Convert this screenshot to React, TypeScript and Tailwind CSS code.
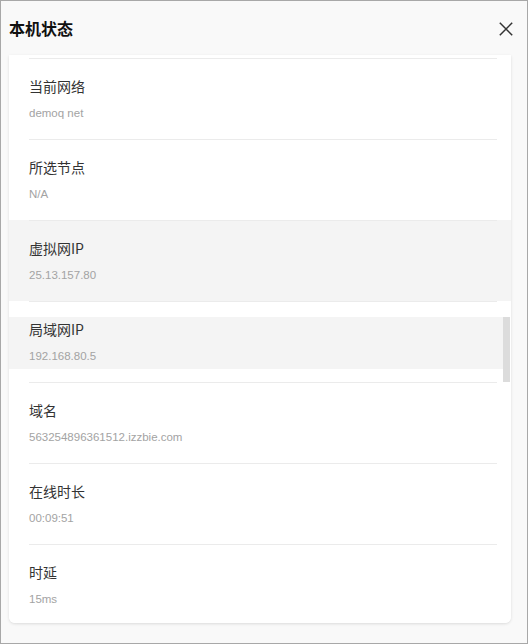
import React from "react";

const rows = [
  { label: "当前网络", value: "demoq net" },
  { label: "所选节点", value: "N/A" },
  { label: "虚拟网IP", value: "25.13.157.80", hl: "full" },
  { label: "局域网IP", value: "192.168.80.5", hl: "part" },
  { label: "域名", value: "563254896361512.izzbie.com" },
  { label: "在线时长", value: "00:09:51" },
  { label: "时延", value: "15ms" },
];

export default function App() {
  return (
    <div
      className="w-[528px] h-[644px] border border-[#a8a8a8] bg-[#f9f9f9] flex flex-col overflow-hidden"
      style={{ fontFamily: '"Noto Sans CJK SC", "Noto Sans", sans-serif' }}
    >
      <div className="h-[54px] shrink-0 flex items-center justify-between pl-[8px] pr-[14px]">
        <div className="text-[16px] font-bold text-[#111] leading-[20px]">本机状态</div>
        <svg width="14" height="14" viewBox="0 0 14 14" className="mt-[1px]">
          <path d="M0.8 0.8 L13.2 13.2 M13.2 0.8 L0.8 13.2" stroke="#333" strokeWidth="1.5" fill="none" />
        </svg>
      </div>
      <div className="relative ml-[8px] w-[502px] h-[568px] shrink-0 bg-white rounded-b-[6px] overflow-hidden shadow-[0_1px_3px_rgba(0,0,0,0.12)] pt-[3px]">
        {rows.map((r) => (
          <div
            key={r.label}
            className={`relative ${r.hl === "full" ? "bg-[#f4f4f4]" : "bg-white"}`}
          >
            {r.hl === "part" && (
              <div className="absolute left-0 right-[8px] top-[16px] h-[52px] bg-[#f4f4f4]" />
            )}
            <div className="relative ml-[20px] mr-[14px] border-t border-[#ebebeb] pt-[17px] pb-[18px]">
              <div className="text-[14px] leading-[20px] text-[#333]">{r.label}</div>
              <div
                className="mt-[9px] text-[11.5px] leading-[16px] text-[#a3a3a3]"
                style={{ fontFamily: '"Liberation Sans", Arial, sans-serif' }}
              >
                {r.value}
              </div>
            </div>
          </div>
        ))}
        <div className="absolute right-[1px] top-[262px] w-[7px] h-[65px] bg-[#dcdcdc]" />
      </div>
    </div>
  );
}
